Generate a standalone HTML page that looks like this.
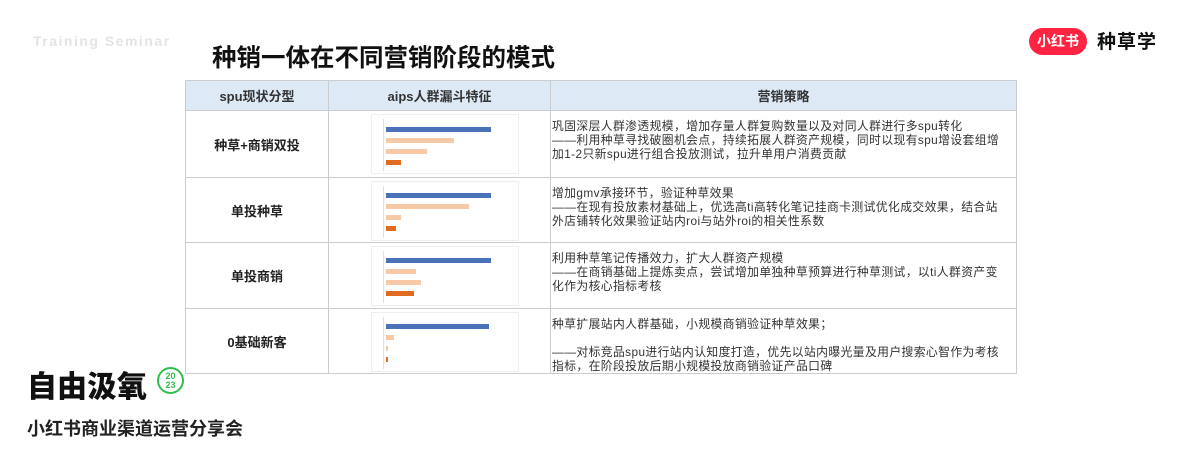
<!DOCTYPE html>
<html><head><meta charset="utf-8"><style>
*{margin:0;padding:0;box-sizing:border-box}
body{width:1200px;height:450px;background:#fff;position:relative;overflow:hidden;font-family:"Liberation Sans","Noto Sans CJK SC",sans-serif}
.abs{position:absolute}
table{position:absolute;left:185px;top:80px;border-collapse:collapse;width:832px;table-layout:fixed}
td,th{border:1px solid #c9ccd0;overflow:hidden}
th{background:#dde9f5;height:30px;font-size:13px;font-weight:bold;color:#333}
td{font-size:13px}
.c1{text-align:center;font-weight:bold;color:#222}
.c2{position:relative}
.c3{font-size:11.8px;letter-spacing:0.4px;line-height:14px;color:#333;padding:0 0 0 1px;vertical-align:top;padding-top:8px;white-space:nowrap}
.chart{position:absolute;left:42px;top:3px;width:148px;height:60px;background:#fff;border:1px solid #eee}
.bar{position:absolute;left:14px;height:5px}
.b{background:#4a72b8}.l{background:#f8c9a6}.o{background:#e06c1f}
.ax{position:absolute;left:11px;top:4px;width:1px;height:52px;background:#e0e0e0}
</style></head><body>
<div class="abs" style="left:33px;top:33px;font-size:14px;font-weight:bold;color:#e4e4e4;letter-spacing:1.5px">Training Seminar</div>
<div class="abs" style="left:212px;top:44px;font-size:24.5px;font-weight:bold;color:#111;line-height:30px">种销一体在不同营销阶段的模式</div>
<div class="abs" style="left:1029px;top:28px;width:58px;height:27px;border-radius:14px;background:#ff2442;color:#fff;font-size:14px;font-weight:bold;text-align:center;line-height:27px">小红书</div>
<div class="abs" style="left:1097px;top:29px;font-size:19px;font-weight:bold;color:#111;line-height:28px;letter-spacing:1px">种草学</div>
<table>
<colgroup><col style="width:143px"><col style="width:222px"><col></colgroup>
<tr><th>spu现状分型</th><th>aips人群漏斗特征</th><th>营销策略</th></tr>
<tr style="height:67px"><td class="c1">种草+商销双投</td><td class="c2"><div class="chart"><div class="ax"></div><div class="bar b" style="top:12px;width:105px"></div><div class="bar l" style="top:23px;width:68px"></div><div class="bar l" style="top:34px;width:41px"></div><div class="bar o" style="top:45px;width:15px"></div></div></td><td class="c3">巩固深层人群渗透规模，增加存量人群复购数量以及对同人群进行多spu转化<br>——利用种草寻找破圈机会点，持续拓展人群资产规模，同时以现有spu增设套组增<br>加1-2只新spu进行组合投放测试，拉升单用户消费贡献</td></tr>
<tr style="height:65px"><td class="c1">单投种草</td><td class="c2"><div class="chart"><div class="ax"></div><div class="bar b" style="top:11px;width:105px"></div><div class="bar l" style="top:22px;width:83px"></div><div class="bar l" style="top:33px;width:15px"></div><div class="bar o" style="top:44px;width:10px"></div></div></td><td class="c3">增加gmv承接环节，验证种草效果<br>——在现有投放素材基础上，优选高ti高转化笔记挂商卡测试优化成交效果，结合站<br>外店铺转化效果验证站内roi与站外roi的相关性系数</td></tr>
<tr style="height:66px"><td class="c1">单投商销</td><td class="c2"><div class="chart"><div class="ax"></div><div class="bar b" style="top:11px;width:105px"></div><div class="bar l" style="top:22px;width:30px"></div><div class="bar l" style="top:33px;width:35px"></div><div class="bar o" style="top:44px;width:28px"></div></div></td><td class="c3">利用种草笔记传播效力，扩大人群资产规模<br>——在商销基础上提炼卖点，尝试增加单独种草预算进行种草测试，以ti人群资产变<br>化作为核心指标考核</td></tr>
<tr style="height:64px"><td class="c1">0基础新客</td><td class="c2"><div class="chart"><div class="ax"></div><div class="bar b" style="top:11px;width:103px"></div><div class="bar l" style="top:22px;width:8px"></div><div class="bar l" style="top:33px;width:2px"></div><div class="bar o" style="top:44px;width:2px"></div></div></td><td class="c3">种草扩展站内人群基础，小规模商销验证种草效果；<br><br>——对标竞品spu进行站内认知度打造，优先以站内曝光量及用户搜索心智作为考核<br>指标，在阶段投放后期小规模投放商销验证产品口碑</td></tr>
</table>
<div class="abs" style="left:27px;top:370px;font-size:30px;font-weight:900;color:#111;line-height:36px">自由汲氧</div>
<div class="abs" style="left:157px;top:367px;width:27px;height:27px;border:2px solid #2fbf4f;border-radius:50%;color:#2fbf4f;font-size:9px;font-weight:bold;line-height:9px;text-align:center;padding-top:3px">20<br>23</div>
<div class="abs" style="left:27px;top:417px;font-size:18px;font-weight:bold;color:#222;line-height:24px">小红书商业渠道运营分享会</div>
</body></html>
